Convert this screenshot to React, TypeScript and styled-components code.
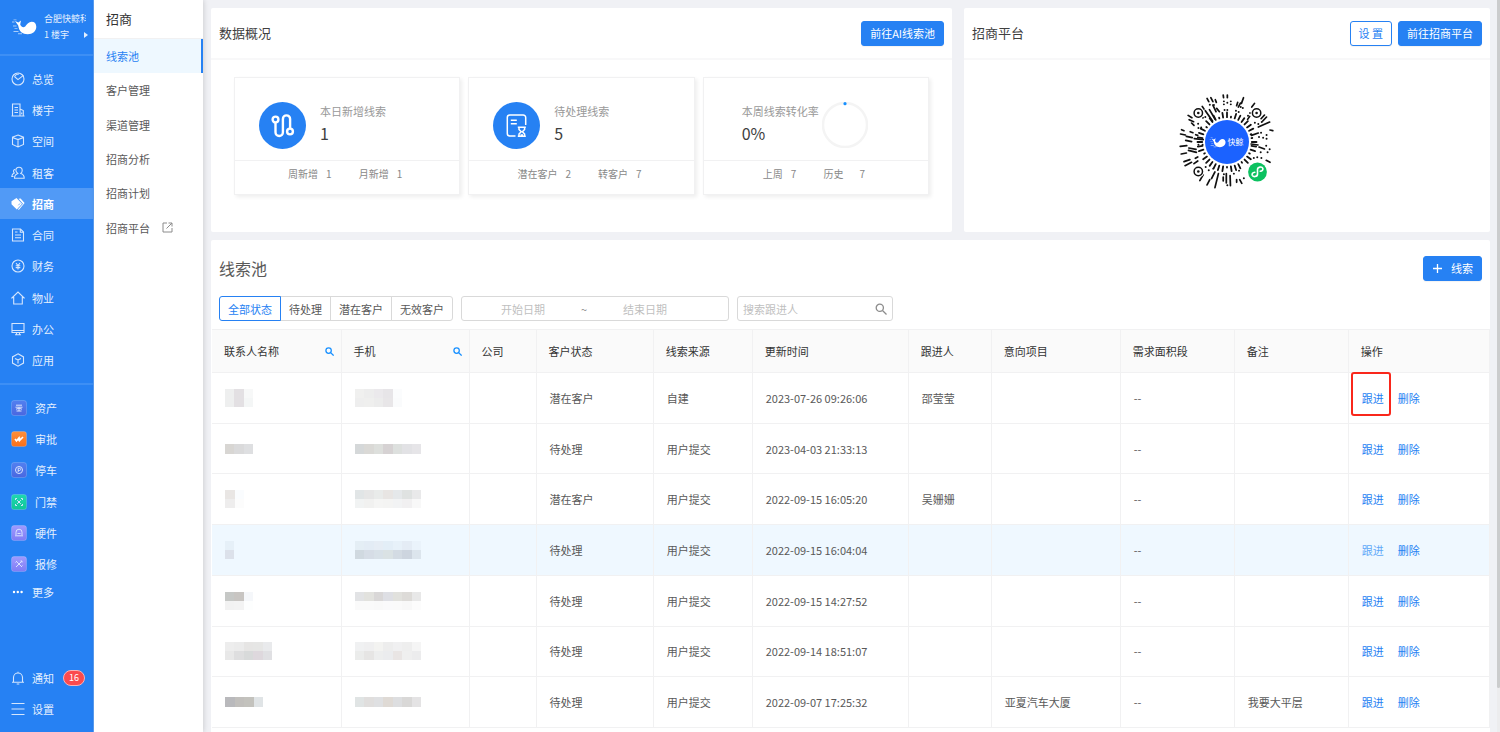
import React from "react";
import styled, { createGlobalStyle, css } from "styled-components";

const blue = "#2681f3";
const line = "#f1f1f2";

const GlobalStyle = createGlobalStyle`
  * { box-sizing: border-box; }
  body {
    margin: 0;
    background: #f0f1f5;
    color: #595959;
    font: 11px/16px "Noto Sans CJK SC", "Noto Sans", sans-serif;
  }
  button, input { font: inherit; }
  h1, h2, p, ul { margin: 0; padding: 0; font-weight: 400; }
  ul { list-style: none; }
  a { text-decoration: none; color: inherit; }
`;

const Shell = styled.div`
  display: flex;
  height: 100vh;
  overflow: hidden;
`;

/* ---------- primary navigation ---------- */

const Sidebar = styled.nav`
  flex: none;
  display: flex;
  flex-direction: column;
  width: 94px;
  padding-bottom: 8px;
  background: ${blue};
  border-right: 1px solid #5ba0f6;
  color: #e3effe;
`;

const Brand = styled.div`
  display: flex;
  align-items: center;
  gap: 7px;
  height: 56px;
  padding-left: 11px;
  border-bottom: 2px solid #3d8ff5;
`;

const BrandText = styled.div`
  flex: 1;
  min-width: 0;
  margin-right: 5px;
  font-size: 9px;
`;

const BrandName = styled.div`
  margin-right: 2px;
  overflow: hidden;
  white-space: nowrap;
`;

const BrandRow = styled.div`
  display: flex;
  align-items: center;
  justify-content: space-between;
`;

const Caret = styled.span`
  border: 3px solid transparent;
  border-left: 4px solid #e3effe;
  border-right: 0;
`;

const NavGroup = styled.ul<{ $height: number; $top?: number }>`
  display: grid;
  grid-auto-rows: 1fr;
  min-height: ${(p) => p.$height}px;
  margin-top: ${(p) => p.$top ?? 0}px;
`;

const Divider = styled.hr`
  width: 100%;
  height: 2px;
  margin: 7px 0 0;
  border: 0;
  background: #3d8ff5;
`;

const NavLink = styled.a<{ $active?: boolean; $gap?: number }>`
  display: flex;
  align-items: center;
  gap: ${(p) => p.$gap ?? 7}px;
  height: 100%;
  padding-left: 11px;
  ${(p) =>
    p.$active &&
    css`
      background: #519af6;
      color: #fff;
      font-weight: 700;
    `}
`;

const MoreLink = styled(NavLink)`
  height: 24px;
`;

const Spacer = styled.div`
  flex: 1;
`;

const Badge = styled.span`
  margin-left: 2px;
  padding: 0 5px;
  border: 1px solid #f9b3b8;
  border-radius: 8px;
  background: #fb4a4e;
  color: #fff;
  font-size: 9px;
  line-height: 14px;
`;

/* ---------- secondary navigation ---------- */

const Submenu = styled.nav`
  flex: none;
  z-index: 1;
  width: 109px;
  background: #fff;
  box-shadow: 1px 0 5px rgba(0, 0, 0, 0.14);
`;

const SubmenuTitle = styled.h1`
  height: 39px;
  padding: 9px 12px;
  border-bottom: 1px solid ${line};
  color: #333;
  font-size: 13px;
  line-height: 20px;
`;

const SubLink = styled.a<{ $active?: boolean }>`
  display: flex;
  align-items: center;
  gap: 12px;
  height: 100%;
  padding-left: 12px;
  border-right: 2px solid transparent;
  ${(p) =>
    p.$active &&
    css`
      background: #eef8ff;
      border-right-color: ${blue};
      color: ${blue};
    `}
`;

/* ---------- content ---------- */

const Main = styled.main`
  flex: 1;
  min-width: 0;
  padding: 8px 7px 8px 8px;
  overflow-y: auto;
  scrollbar-width: none;
`;

const ScrollRail = styled.div`
  flex: none;
  width: 3px;
  background: #ececee;
`;

const ScrollThumb = styled.div`
  height: 94%;
  background: #cbcccd;
  border-radius: 0 0 2px 2px;
`;

const TopRow = styled.div`
  display: flex;
  gap: 12px;
  margin-bottom: 8px;
`;

const Card = styled.section`
  background: #fff;
  border-radius: 2px;
`;

const Overview = styled(Card)`
  flex: 0 0 calc((100% + 12px) * 7 / 12 - 12px);
`;

const Platform = styled(Card)`
  flex: 1;
  min-width: 0;
`;

const CardHead = styled.header`
  display: flex;
  align-items: center;
  justify-content: space-between;
  height: 52px;
  padding: 0 8px;
  border-bottom: 2px solid #f8f8f9;
`;

const CardTitle = styled.h2`
  color: #404040;
  font-size: 13px;
  line-height: 20px;
`;

const Actions = styled.div`
  display: flex;
  gap: 6px;
`;

const Button = styled.button<{ $outline?: boolean }>`
  display: inline-flex;
  align-items: center;
  justify-content: center;
  gap: 8px;
  height: 25px;
  padding: 0 8px;
  border: 1px solid ${blue};
  border-radius: 3px;
  background: ${(p) => (p.$outline ? "#fff" : blue)};
  color: ${(p) => (p.$outline ? blue : "#fff")};
  box-shadow: 0 1px 1px rgba(0, 0, 0, 0.05);
  white-space: pre;
`;

const Stats = styled.div`
  display: grid;
  grid-template-columns: repeat(3, minmax(0, 1fr));
  gap: 8px;
  padding: 17px 23px 37px;
`;

const Stat = styled.article`
  border: 1px solid ${line};
  background: #fff;
  box-shadow: 2px 2px 4px rgba(0, 0, 0, 0.07);
`;

const StatBody = styled.div<{ $ring?: boolean }>`
  display: flex;
  align-items: center;
  gap: ${(p) => (p.$ring ? 3 : 14)}px;
  height: 82px;
  padding: 12px 0 0 ${(p) => (p.$ring ? 38 : 24)}px;
  white-space: nowrap;
`;

const StatLabel = styled.p`
  color: #999;
`;

const StatValue = styled.p`
  margin: 4px 0 4px;
  color: #404040;
  font-size: 16px;
  line-height: 20px;
`;

const StatFoot = styled.footer`
  display: flex;
  justify-content: center;
  gap: 27px;
  height: 34px;
  padding: 5px 4px 0 0;
  border-top: 1px solid ${line};
  color: #888;
  font-size: 10px;
`;

const FootItem = styled.span<{ $wide?: boolean }>`
  display: flex;
  gap: ${(p) => (p.$wide ? 16 : 8)}px;
`;

const CodeHolder = styled.div`
  display: flex;
  justify-content: center;
  padding-top: 31px;
`;

const ListCard = styled(Card)`
  padding-bottom: 24px;
`;

const ListHead = styled.header`
  display: flex;
  align-items: center;
  justify-content: space-between;
  padding: 15px 8px;
`;

const ListTitle = styled.h2`
  color: #595959;
  font-size: 16px;
  line-height: 26px;
`;

const Filters = styled.div`
  display: flex;
  gap: 8px;
  padding: 0 8px 8px;
`;

const Segments = styled.div`
  display: flex;
`;

const Segment = styled.button<{ $on?: boolean }>`
  height: 25px;
  margin-left: -1px;
  padding: 0 8px;
  border: 1px solid #d9d9d9;
  background: #fff;
  color: #595959;
  &:first-child { margin-left: 0; border-radius: 3px 0 0 3px; }
  &:last-child { border-radius: 0 3px 3px 0; }
  ${(p) =>
    p.$on &&
    css`
      z-index: 1;
      border-color: ${blue};
      color: ${blue};
    `}
`;

const Field = styled.label<{ $width: number }>`
  display: flex;
  align-items: center;
  width: ${(p) => p.$width}px;
  height: 25px;
  padding: 0 5px;
  border: 1px solid #d9d9d9;
  border-radius: 3px;
  background: #fff;
  color: #8c8c8c;
`;

const TextInput = styled.input<{ $date?: boolean }>`
  ${(p) => (p.$date ? "width: 112px; text-align: center;" : "flex: 1; min-width: 0;")}
  padding: 0;
  border: 0;
  outline: 0;
  background: none;
  color: #595959;
  &::placeholder { color: #bfbfbf; opacity: 1; }
`;

const Tilde = styled.span`
  width: 10px;
  text-align: center;
`;

const Table = styled.table`
  width: calc(100% - 1px);
  height: 399px;
  margin-left: 1px;
  table-layout: fixed;
  border-collapse: collapse;
  border-top: 1px solid ${line};
`;

const Th = styled.th`
  height: 43px;
  padding: 0 7px 0 12px;
  border-right: 1px solid ${line};
  border-bottom: 1px solid ${line};
  background: #fafafa;
  color: #333;
  font-weight: 400;
  text-align: left;
`;

const ThInner = styled.div`
  display: flex;
  align-items: center;
  justify-content: space-between;
`;

const Td = styled.td`
  height: 50px;
  padding: 0 0 0 13px;
  border-right: 1px solid ${line};
  border-bottom: 1px solid ${line};
  white-space: nowrap;
`;

const Tr = styled.tr<{ $hover?: boolean }>`
  background: ${(p) => (p.$hover ? "#eff8ff" : "#fff")};
`;

const RowLink = styled.a<{ $light?: boolean; $boxed?: boolean }>`
  position: relative;
  display: inline-block;
  color: ${(p) => (p.$light ? "#5fa8f8" : blue)};
  ${(p) =>
    p.$boxed &&
    css`
      &::after {
        content: "";
        position: absolute;
        inset: -18px -7px -10px -11px;
        border: 2px solid #f9271b;
        border-radius: 3px;
      }
    `}
`;

const RowActions = styled.div`
  display: flex;
  gap: 14px;
`;

/* ---------- drawings ---------- */

const Whale = ({ width = 26, height = 18 }: { width?: number; height?: number }) => (
  <svg width={width} height={height} viewBox="0 0 26 18" fill="#fff" aria-hidden="true">
    <path d="M4 3l3.400 1.400L10 2.600l-.8 4C10.500 9.500 12.500 9.800 14.200 8.600 16 6 17.800 3.800 20.600 3.800c3 0 4.700 2 4.700 4.900 0 4.400-3.700 7.500-8.600 7.500-5.200 0-8.700-2.600-9.500-8.700z" />
    <path d="M1 3.500h2.500v1H1zM2.500 1.500h3v.8h-3zM2 7.500h3.500v.9H2zM3.500 10h3v.8h-3zM2.500 13h5v.9h-5zM7 15.300h4v.9H7z" opacity=".6" />
  </svg>
);

const glyphs: Record<string, React.ReactNode> = {
  总览: <><circle cx="7" cy="7" r="6" /><path d="M3.400 4.500 7 7.600l5.400-4.200M3.400 4.500C4.500 2.800 6 2 8 2" /></>,
  楼宇: <><path d="M1.500 13V1H9v12M9 6l3.300 1.600V13M.5 13h13" /><path d="M3.500 4.500H7M3.500 7H7M3.500 9.500H7M10.700 9.500v1.800" /></>,
  空间: <path d="m7 1 5.500 2.200v7.300L7 13l-5.500-2.500V3.200zM1.500 3.400 7 5.600l5.500-2.200M7 5.600V13" />,
  租客: <><path d="M8 1.200c2 0 3.200 1.300 3.200 3.200 0 1.500-.6 2.300-1.400 3.100 2 .6 3.400 2 3.400 4.700H3.500c0-2.700 1.500-4.100 3.300-4.700-.8-.8-1.900-1.600-1.900-3.100C4.900 2.500 6 1.200 8 1.200z" /><path d="M4.300 3.200C2 3.800 2.200 6 3.200 7 1.600 7.700.9 8.800.8 10.500h1.700" /></>,
  合同: <><path d="M1.500 1h8l3 3v9h-11z" /><path d="M4 4h2.500M4 7h6M4 9.800h6M9.300 1v3.200h3" /></>,
  财务: <><circle cx="7" cy="7" r="6" /><path d="m5 4 2 2.500L9 4M4.700 6.700h4.600M4.700 8.600h4.600M7 6.500V10.500" /></>,
  物业: <path d="M2.700 6.500 1 6.800 7 1l6 5.800-1.700-.3V13H2.700z" />,
  办公: <path d="M1 1.500h12v9H1zM1 8.500h12M5.500 10.500v2M8.500 10.500v2M4 12.800h6" />,
  应用: <path d="m7 .8 5.500 3.100v6.200L7 13.200l-5.500-3.100V3.900zM4 5.400 7 7l3-1.600M7 7v3.400" />,
  通知: <path d="M2.500 11V6.500a4.500 4.500 0 0 1 9 0V11M1 11.200h12M7 .7V2M5.700 13h2.600" />,
  设置: <path d="M.5 1.500h13M.5 7h13M.5 12.500h13" />,
};

const NavGlyph = ({ name }: { name: string }) => {
  if (name === "招商")
    return (
      <svg width="14" height="14" viewBox="0 0 14 14" aria-hidden="true">
        <path d="M5.500 1 11 6.700 5.800 12.600.5 7.200V4.300z" fill="#fff" />
        <path d="M7.600 1.800 9.600 1.500l4 4.400L8 12.700l-1.200-.3 5.200-5.700z" fill="#fff" />
        <path d="m7.300 8.300 1.800-1.900" stroke="#519af6" strokeWidth=".8" />
      </svg>
    );
  if (name === "更多")
    return (
      <svg width="14" height="14" viewBox="0 0 14 14" fill="#fff" aria-hidden="true">
        <circle cx="3" cy="7" r="1.200" /><circle cx="6.800" cy="7" r="1.200" /><circle cx="10.600" cy="7" r="1.200" />
      </svg>
    );
  return (
    <svg width="14" height="14" viewBox="0 0 14 14" fill="none" stroke="#d5e6fd" strokeWidth="1.100" aria-hidden="true">
      {glyphs[name]}
    </svg>
  );
};

const apps: { name: string; from: string; to: string; art: React.ReactNode }[] = [
  { name: "资产", from: "#5280f0", to: "#4a67e0", art: <path d="M5 5.200h6M4.500 7.200h7M5 9.200l3-1 3 1M8 7.200V11M5.500 11h5" /> },
  { name: "审批", from: "#ff8f3a", to: "#f9701a", art: <path d="m4 8 1.500 2L8 6.800 8.500 9.500 12 6M6.500 9.500 9 6.500" strokeWidth="1.600" stroke="#fff" /> },
  { name: "停车", from: "#5280f0", to: "#4a67e0", art: <><circle cx="8" cy="8" r="3.500" /><path d="M7.200 10V6.300h1.300a1 1 0 0 1 0 2.200H7.200" /></> },
  { name: "门禁", from: "#1fd8b0", to: "#10c698", art: <path d="M4.500 6V4.500H6M10 4.500h1.500V6M11.500 10v1.500H10M6 11.500H4.500V10M6.200 6.200l3.600 3.600M9.800 6.200 6.200 9.800" /> },
  { name: "硬件", from: "#a09bff", to: "#7f7cf5", art: <path d="M5 10V7.200a3 3 0 0 1 6 0V10M4 10.800h8M6.500 8.500h3" /> },
  { name: "报修", from: "#a09bff", to: "#7f7cf5", art: <path d="m5 5 6 6M11 5l-6 6M4.500 6.500 6 5M10 11l1.500-1.500M9.500 5H11v1.500" /> },
];

const AppGlyph = ({ app }: { app: (typeof apps)[number] }) => (
  <svg width="16" height="16" viewBox="0 0 16 16" fill="none" stroke="#d8e2ff" strokeWidth="1" aria-hidden="true">
    <defs>
      <linearGradient id={`tile-${app.name}`} x2="0" y2="1">
        <stop stopColor={app.from} /><stop offset="1" stopColor={app.to} />
      </linearGradient>
    </defs>
    <rect x=".5" y=".5" width="15" height="15" rx="2.500" fill={`url(#tile-${app.name})`} stroke="#fff" strokeOpacity=".18" />
    {app.art}
  </svg>
);

const SearchIcon = ({ size, color, weight = 1.3 }: { size: number; color: string; weight?: number }) => (
  <svg width={size} height={size} viewBox="0 0 12 12" fill="none" stroke={color} strokeWidth={weight} aria-hidden="true">
    <circle cx="4.800" cy="4.800" r="3.600" /><path d="m7.500 7.500 4 4" />
  </svg>
);

const PathIcon = () => (
  <svg width="47" height="47" viewBox="0 0 47 47" fill="none" aria-hidden="true">
    <circle cx="23.500" cy="23.500" r="23.500" fill={blue} />
    <g stroke="#fff" strokeWidth="2.400">
      <circle cx="16.500" cy="17.500" r="2.900" /><circle cx="31" cy="29.500" r="2.900" />
      <path d="M16.500 20.500v9.800a3.700 3.700 0 0 0 7.400 0V17a3.600 3.600 0 0 1 7.200 0v9.500" />
    </g>
  </svg>
);

const TaskIcon = () => (
  <svg width="47" height="47" viewBox="0 0 47 47" fill="none" aria-hidden="true">
    <circle cx="23.500" cy="23.500" r="23.500" fill={blue} />
    <g stroke="#fff" strokeWidth="1.500">
      <path d="M22.500 34h-5.700a2.500 2.500 0 0 1-2.500-2.500v-16a2.500 2.500 0 0 1 2.500-2.500h13.400a2.500 2.500 0 0 1 2.500 2.500V23M17.800 18.200h6M17.800 21.800h6" />
      <path d="M24.800 25.200h8M24.800 34.200h8M26 25.500v2l2.200 2.200L26 32v2M31.600 25.500v2l-2.200 2.200 2.200 2.300v2M27.500 33h2.600" />
    </g>
  </svg>
);

const Ring = () => (
  <svg width="46" height="46" viewBox="0 0 46 46" fill="none" aria-hidden="true">
    <circle cx="23" cy="23" r="22" stroke="#f4f4f4" strokeWidth="2.500" />
    <circle cx="23" cy="1.700" r="1.600" fill="#1890ff" />
  </svg>
);

/* Outer marks of the mini-program code, as line ends relative to its grid. */
const marks = [
  "764 284 765 292", "776 284 776 292", "717 294 722 304", "728 292 734 304", "741 298 744 306",
  "703 318 708 326", "712 331 733 362", "724 328 740 356", "734 314 743 334", "745 324 753 334",
  "823 292 817 309", "806 306 803 316", "814 308 808 320", "855 309 847 320", "841 348 835 357",
  "884 344 874 355", "890 350 879 362", "899 365 866 380", "900 389 908 391", "866 398 846 405",
  "845 431 865 434", "868 440 884 446", "889 480 900 486", "662 345 673 352", "665 358 678 364",
  "672 368 679 375", "643 388 650 391", "640 401 654 404", "668 394 676 397", "657 408 674 412",
  "655 420 672 424", "684 403 690 405", "680 415 706 418", "639 438 658 436", "663 450 686 456",
  "642 461 657 458", "650 484 667 478", "653 496 672 486", "683 474 690 470", "679 490 690 482",
  "696 541 706 523", "717 554 725 538", "730 535 740 515", "740 562 750 520", "764 542 764 530",
  "773 548 773 520", "785 556 784 526", "803 538 803 546", "812 538 818 549", "664 443 685 447",
];
const dots = [
  "766 303", "766 312", "776 307", "786 303", "786 312", "768 329", "776 329", "725 313", "737 314",
  "705 352", "712 350", "801 331", "809 335", "821 323", "815 320", "842 338", "836 346", "856 367",
  "866 371", "876 365", "874 397", "890 404", "868 410", "880 412", "890 415", "889 436", "899 447",
  "873 456", "893 456", "853 473", "863 471", "875 473", "691 370", "692 383", "692 433", "704 433",
  "776 555", "766 522", "824 534", "810 511", "700 381", "795 520", "713 500", "722 510", "735 505",
];
const spokes = Array.from({ length: 40 }, (_, i) => {
  const a = (i * Math.PI) / 20;
  const outer = i % 7 === 3 || i % 11 === 6 ? 25.6 : 29.5;
  return `M${50 + 24.8 * Math.cos(a)} ${50 + 24.8 * Math.sin(a)}L${50 + outer * Math.cos(a)} ${50 + outer * Math.sin(a)}`;
}).join("");

const MiniCode = () => (
  <svg width="102" height="102" viewBox="-1 -1 102 102" fill="none" role="img" aria-label="快鲸">
    <g transform="translate(50 50) scale(.344 .333) translate(-775 -425)" stroke="#111" strokeWidth="5" strokeLinecap="round">
      {marks.map((m) => {
        const [x1, y1, x2, y2] = m.split(" ");
        return <line key={m} x1={x1} y1={y1} x2={x2} y2={y2} />;
      })}
      {dots.map((d) => {
        const [x, y] = d.split(" ");
        return <circle key={d} cx={x} cy={y} r="2.900" fill="#111" stroke="none" />;
      })}
    </g>
    <path d={spokes} stroke="#111" strokeWidth="1.800" strokeLinecap="round" />
    {[[21.3, 21], [79.6, 21], [21.3, 79.5]].map(([x, y]) => (
      <g key={`${x}-${y}`}>
        <circle cx={x} cy={y} r="6" fill="#fff" />
        <circle cx={x} cy={y} r="4.200" stroke="#111" strokeWidth="1.500" />
        <circle cx={x} cy={y} r="1.300" fill="#111" />
      </g>
    ))}
    <circle cx="50" cy="50" r="22" fill="#1b62ff" />
    <svg x="32" y="44.500" width="17" height="12" viewBox="0 0 26 18"><Whale /></svg>
    <text x="50.500" y="53" fontSize="8" fill="#fff">快鲸</text>
    <circle cx="80.500" cy="80" r="11" fill="#fff" />
    <circle cx="80.500" cy="80" r="9.400" fill="#0cc160" />
    <path d="M77.800 80.300c-2.200.2-3 1.600-2.600 3 .8 2 5.200 1.600 5.300-1.200v-4.600c.1-2.800 4.500-3.200 5.300-1.200.4 1.400-.4 2.800-2.600 3" stroke="#fff" strokeWidth="1.600" strokeLinecap="round" />
  </svg>
);

/* Pixelated cover over private values; one string per line of cells. */
const Mosaic = ({ rows, cell = 9 }: { rows: string[]; cell?: number }) => {
  const grid = rows.map((r) => r.split(" "));
  const cols = Math.max(...grid.map((r) => r.length));
  const width = Math.round(cols * 9.4);
  return (
    <svg width={width} height={rows.length * cell} viewBox={`0 0 ${cols} ${rows.length}`} preserveAspectRatio="none" display="block" shapeRendering="crispEdges" aria-hidden="true">
      {grid.map((r, y) => r.map((c, x) => <rect key={`${x}-${y}`} x={x} y={y} width="1" height="1" fill={`#${c}`} />))}
    </svg>
  );
};

/* ---------- data ---------- */

const mainNav = ["总览", "楼宇", "空间", "租客", "招商", "合同", "财务", "物业", "办公", "应用"];
const subNav = ["线索池", "客户管理", "渠道管理", "招商分析", "招商计划", "招商平台"];
const columns: [string, number][] = [
  ["联系人名称", 129], ["手机", 128], ["公司", 67], ["客户状态", 117], ["线索来源", 99], ["更新时间", 156],
  ["跟进人", 83], ["意向项目", 129], ["需求面积段", 114], ["备注", 114], ["操作", 141],
];

const leads = [
  { name: ["eeefef e3e0e3 f7f8f8", "eeefef e3e0e3 f4f6f6"], phone: ["f0f0ef ededed ebe9ec e7e5e8 fbfcfd", "eeeeee efefee ececec e8e6e8 fafbfc"], cell: 9, status: "潜在客户", source: "自建", time: "2023-07-26 09:26:06", owner: "邵莹莹", project: "", note: "" },
  { name: ["d8d6d3 dadadb dedfe1"], phone: ["d5d8d9 dad9d6 dddfdc d6d2d3 dde0de e2e2e5 e6e5e8"], cell: 10, status: "待处理", source: "用户提交", time: "2023-04-03 21:33:13", owner: "", project: "", note: "" },
  { name: ["e9e6e4 fafcfe", "eeeded fcfcfc"], phone: ["e1e5e6 e6e6e6 e9ebea e8e5e3 e5e8ea dfe2e1 e9e9ea", "f1f3f3 f1f1f0 f5f5f4 f4f4f3 f2f3f4 f1f0f1 f8f8f8"], cell: 9, status: "潜在客户", source: "用户提交", time: "2022-09-15 16:05:20", owner: "吴姗姗", project: "", note: "" },
  { name: ["e6f0f8", "dce1ea"], phone: ["e4eef5 e3ecf5 e6edf5 e3eef7 e7f1f9 e4ecf5 eaf3fb", "d0d9e0 d6dde6 d8e1e8 dae2e4 d3dbe3 cdd5df dce5ed"], cell: 9, status: "待处理", source: "用户提交", time: "2022-09-15 16:04:04", owner: "", project: "", note: "" },
  { name: ["c6c8c6 c8c5c2 f5f7fa", "f2f2f2 f3f3f3 fdfefe"], phone: ["e2e3e5 e2e2de d9d7d7 dedfe4 e1e1dd dddbd8 e8e8e8", "fafafa fafafa f9f9f9 fafafb fafafa f8f8f8 fcfcfc"], cell: 9, status: "待处理", source: "用户提交", time: "2022-09-15 14:27:52", owner: "", project: "", note: "" },
  { name: ["ededed ebebeb e6e5e4 e6e6e5 e9eaec", "e8e8e8 dededf d8dada ded8dd e0e0e3"], phone: ["f0f1f2 efeff0 f3f3f1 ededed f0f0f1 eeeeee f5f5f5", "ebeceb e6e5e4 edeeee ebecee e9e5e4 efefef ececed"], cell: 9, status: "待处理", source: "用户提交", time: "2022-09-14 18:51:07", owner: "", project: "", note: "" },
  { name: ["b9b9bc c1bfbc c3c2bd e0e4e6"], phone: ["e0e4e4 e0dedd dfe0e2 dfdad5 dddee0 d9d8d7 e4e3e4"], cell: 10, status: "待处理", source: "用户提交", time: "2022-09-07 17:25:32", owner: "", project: "亚夏汽车大厦", note: "我要大平层" },
];

export default function App() {
  return (
    <>
      <GlobalStyle />
      <Shell>
        <Sidebar aria-label="主导航">
          <Brand>
            <Whale />
            <BrandText>
              <BrandName>合肥快鲸科</BrandName>
              <BrandRow>1 楼宇<Caret /></BrandRow>
            </BrandText>
          </Brand>
          <NavGroup $height={313} $top={7}>
            {mainNav.map((n) => (
              <li key={n}><NavLink href="#" $active={n === "招商"}><NavGlyph name={n} />{n}</NavLink></li>
            ))}
          </NavGroup>
          <Divider />
          <NavGroup $height={188} $top={7}>
            {apps.map((a) => (
              <li key={a.name}><NavLink href="#" $gap={8}><AppGlyph app={a} />{a.name}</NavLink></li>
            ))}
          </NavGroup>
          <MoreLink href="#"><NavGlyph name="更多" />更多</MoreLink>
          <Spacer />
          <NavGroup $height={62}>
            <li><NavLink href="#"><NavGlyph name="通知" />通知<Badge>16</Badge></NavLink></li>
            <li><NavLink href="#"><NavGlyph name="设置" />设置</NavLink></li>
          </NavGroup>
        </Sidebar>

        <Submenu aria-label="招商">
          <SubmenuTitle>招商</SubmenuTitle>
          <NavGroup $height={206}>
            {subNav.map((n, i) => (
              <li key={n}>
                <SubLink href="#" $active={i === 0}>
                  {n}
                  {i === 5 && (
                    <svg width="11" height="11" viewBox="0 0 11 11" fill="none" stroke="#8c8c8c" aria-hidden="true">
                      <path d="M5 1H1v9h9V6M6.500 1H10v3.500M10 1 4.500 6.500" />
                    </svg>
                  )}
                </SubLink>
              </li>
            ))}
          </NavGroup>
        </Submenu>

        <Main>
          <TopRow>
            <Overview>
              <CardHead>
                <CardTitle>数据概况</CardTitle>
                <Button type="button">前往AI线索池</Button>
              </CardHead>
              <Stats>
                <Stat>
                  <StatBody>
                    <PathIcon />
                    <div><StatLabel>本日新增线索</StatLabel><StatValue>1</StatValue></div>
                  </StatBody>
                  <StatFoot>
                    <FootItem><span>周新增</span><span>1</span></FootItem>
                    <FootItem><span>月新增</span><span>1</span></FootItem>
                  </StatFoot>
                </Stat>
                <Stat>
                  <StatBody>
                    <TaskIcon />
                    <div><StatLabel>待处理线索</StatLabel><StatValue>5</StatValue></div>
                  </StatBody>
                  <StatFoot>
                    <FootItem><span>潜在客户</span><span>2</span></FootItem>
                    <FootItem><span>转客户</span><span>7</span></FootItem>
                  </StatFoot>
                </Stat>
                <Stat>
                  <StatBody $ring>
                    <div><StatLabel>本周线索转化率</StatLabel><StatValue>0%</StatValue></div>
                    <Ring />
                  </StatBody>
                  <StatFoot>
                    <FootItem><span>上周</span><span>7</span></FootItem>
                    <FootItem $wide><span>历史</span><span>7</span></FootItem>
                  </StatFoot>
                </Stat>
              </Stats>
            </Overview>
            <Platform>
              <CardHead>
                <CardTitle>招商平台</CardTitle>
                <Actions>
                  <Button type="button" $outline>设 置</Button>
                  <Button type="button">前往招商平台</Button>
                </Actions>
              </CardHead>
              <CodeHolder><MiniCode /></CodeHolder>
            </Platform>
          </TopRow>

          <ListCard>
            <ListHead>
              <ListTitle>线索池</ListTitle>
              <Button type="button">
                <svg width="11" height="11" viewBox="0 0 11 11" stroke="#fff" strokeWidth="1.300" aria-hidden="true">
                  <path d="M5.500 1v9M1 5.500h9" />
                </svg>
                线索
              </Button>
            </ListHead>
            <Filters>
              <Segments>
                {["全部状态", "待处理", "潜在客户", "无效客户"].map((s, i) => (
                  <Segment key={s} type="button" $on={i === 0}>{s}</Segment>
                ))}
              </Segments>
              <Field as="div" $width={268}>
                <TextInput $date aria-label="开始日期" placeholder="开始日期" />
                <Tilde>~</Tilde>
                <TextInput $date aria-label="结束日期" placeholder="结束日期" />
              </Field>
              <Field $width={156}>
                <TextInput aria-label="搜索跟进人" placeholder="搜索跟进人" />
                <SearchIcon size={12} color="#8c8c8c" />
              </Field>
            </Filters>
            <Table>
              <colgroup>
                {columns.map(([c, w]) => <col key={c} width={w} />)}
              </colgroup>
              <thead>
                <tr>
                  {columns.map(([c], i) => (
                    <Th key={c} scope="col">
                      <ThInner>{c}{i < 2 && <SearchIcon size={9} color="#1890ff" weight={1.7} />}</ThInner>
                    </Th>
                  ))}
                </tr>
              </thead>
              <tbody>
                {leads.map((l, i) => (
                  <Tr key={l.time} $hover={i === 3}>
                    <Td><Mosaic rows={l.name} cell={l.cell} /></Td>
                    <Td><Mosaic rows={l.phone} cell={l.cell} /></Td>
                    <Td />
                    <Td>{l.status}</Td>
                    <Td>{l.source}</Td>
                    <Td>{l.time}</Td>
                    <Td>{l.owner}</Td>
                    <Td>{l.project}</Td>
                    <Td>--</Td>
                    <Td>{l.note}</Td>
                    <Td>
                      <RowActions>
                        <RowLink href="#" $light={i === 3} $boxed={i === 0}>跟进</RowLink>
                        <RowLink href="#">删除</RowLink>
                      </RowActions>
                    </Td>
                  </Tr>
                ))}
              </tbody>
            </Table>
          </ListCard>
        </Main>
        <ScrollRail><ScrollThumb /></ScrollRail>
      </Shell>
    </>
  );
}
